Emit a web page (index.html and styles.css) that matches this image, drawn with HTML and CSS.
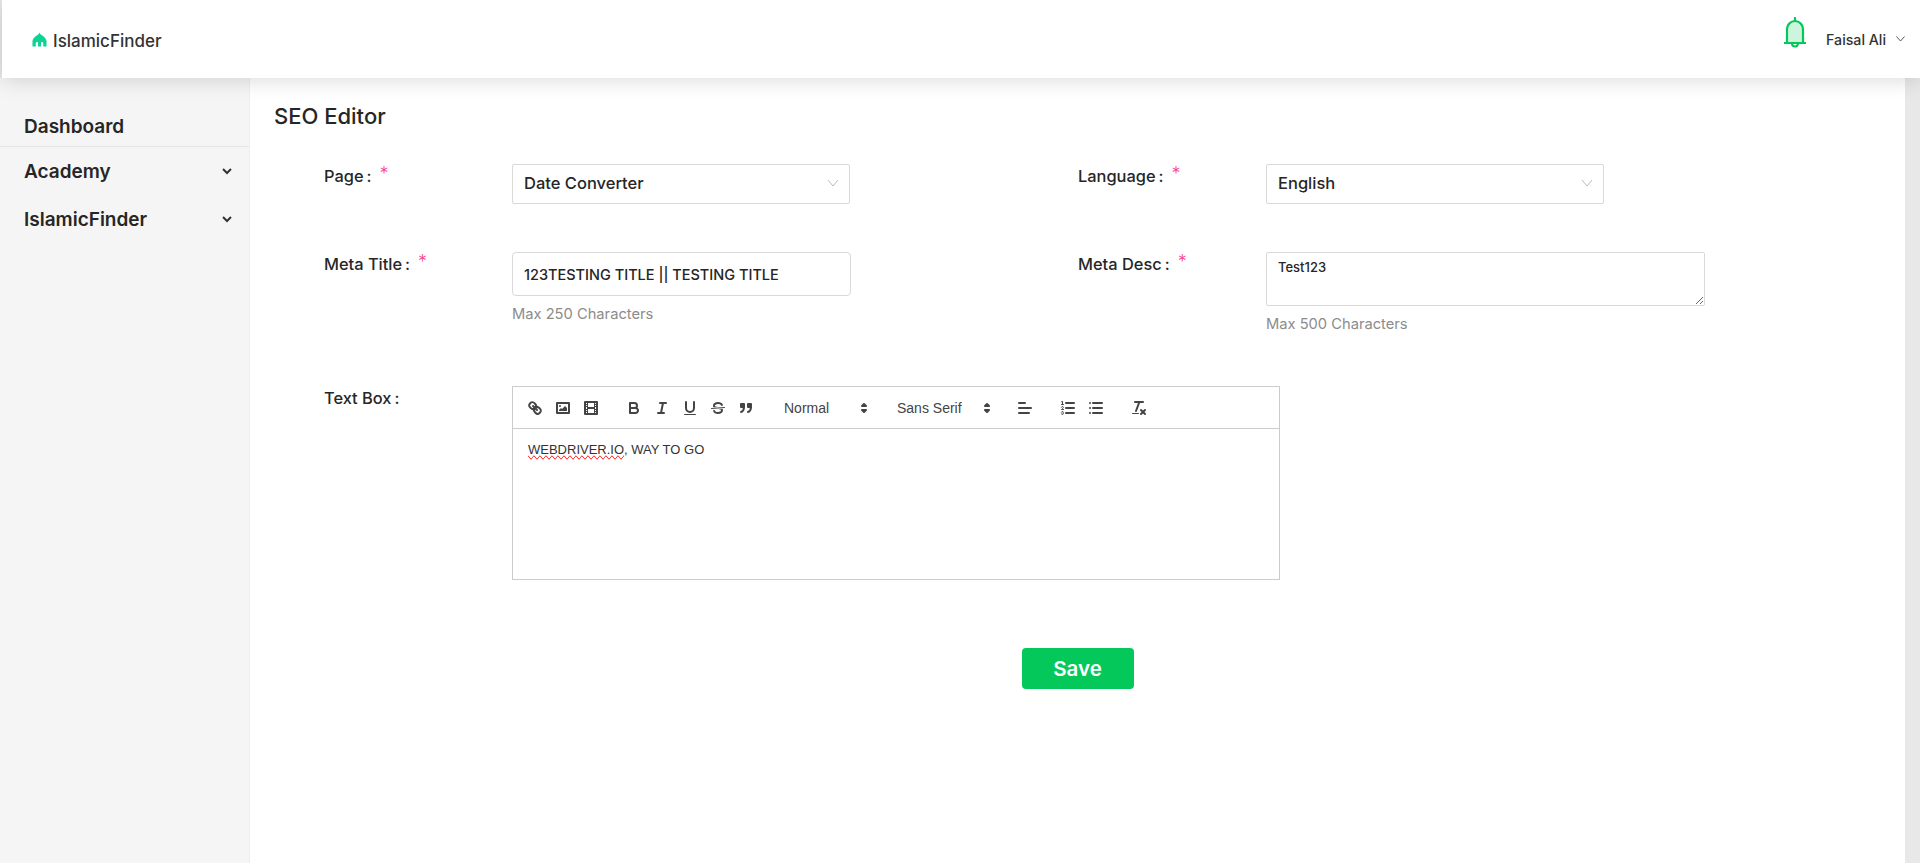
FILE: index.html
```html
<!DOCTYPE html>
<html lang="en">

<head>
    <title>SEO Editor</title>
    <link rel="stylesheet" href="styles.css">
</head>

<body>
    <header class="topbar">
        <a class="logo" href="#">
            <svg class="logo-icon" viewBox="0 0 16 16"><path d="M8 0.5 L9 2.5 C11 4 14.5 5.5 15.5 9.5 V15.5 H12 V12 A1.6 1.6 0 0 0 9.6 11 V15.5 H6.4 V11 A1.6 1.6 0 0 0 4 12 V15.5 H0.5 V9.5 C1.5 5.5 5 4 7 2.5 Z"/></svg>
            <span>IslamicFinder</span>
        </a>
        <div class="topbar-right">
            <svg class="bell" viewBox="0 0 22 32"><path class="bell-body" d="M3 26 V13 C3 7 7 4 11 4 S19 7 19 13 V26"/><path class="bell-line" d="M11 1 V4 M0.5 26 H21.5 M8 26.5 A3 3 0 0 0 14 26.5"/></svg>
            <span class="user">Faisal Ali</span>
            <svg class="chevron-thin user-chevron" viewBox="0 0 9 6"><path d="M0.5 0.5 L4.5 5 L8.5 0.5"/></svg>
        </div>
    </header>

    <div class="layout">
        <aside class="sidebar">
            <a class="nav-item nav-first" href="#">Dashboard</a>
            <a class="nav-item" href="#">Academy <svg class="nav-arrow" viewBox="0 0 10 7"><path d="M1 1 L5 5 L9 1"/></svg></a>
            <a class="nav-item" href="#">IslamicFinder <svg class="nav-arrow" viewBox="0 0 10 7"><path d="M1 1 L5 5 L9 1"/></svg></a>
        </aside>

        <main class="content">
            <h1>SEO Editor</h1>
            <form class="seo-form">
                <div class="form-row row-select">
                    <label class="label">Page<i>:</i><em>*</em></label>
                    <div class="field">
                        <div class="select"><span>Date Converter</span><svg class="chevron-thin" viewBox="0 0 12 8"><path d="M1 1 L6 7 L11 1"/></svg></div>
                    </div>
                    <label class="label">Language<i>:</i><em>*</em></label>
                    <div class="field">
                        <div class="select"><span>English</span><svg class="chevron-thin" viewBox="0 0 12 8"><path d="M1 1 L6 7 L11 1"/></svg></div>
                    </div>
                </div>

                <div class="form-row row-meta">
                    <label class="label">Meta Title<i>:</i><em>*</em></label>
                    <div class="field">
                        <input class="input" type="text" value="123TESTING TITLE || TESTING TITLE">
                        <p class="hint">Max 250 Characters</p>
                    </div>
                    <label class="label">Meta Desc<i>:</i><em>*</em></label>
                    <div class="field">
                        <textarea class="textarea">Test123</textarea>
                        <p class="hint">Max 500 Characters</p>
                    </div>
                </div>

                <div class="form-row row-text">
                    <label class="label">Text Box<i>:</i></label>
                    <div class="editor">
                        <div class="toolbar">
                            <span class="tool-group">
                                <button type="button"><svg viewBox="0 0 18 18"><line class="st" x1="7" x2="11" y1="7" y2="11"/><path class="st" d="M8.9,4.577a3.476,3.476,0,0,1,.36,4.679A3.476,3.476,0,0,1,4.577,8.9C3.185,7.5,2.035,6.4,4.217,4.217S7.5,3.185,8.9,4.577Z"/><path class="st" d="M13.423,9.1a3.476,3.476,0,0,0-4.679-.36,3.476,3.476,0,0,0,.36,4.679c1.392,1.392,2.5,2.542,4.679.36S14.815,10.5,13.423,9.1Z"/></svg></button>
                                <button type="button"><svg viewBox="0 0 18 18"><rect class="st" height="10" width="12" x="3" y="4"/><circle class="fl" cx="6" cy="7" r="1"/><polyline class="fl" points="5 12 5 11 7 9 8 10 11 7 13 9 13 12 5 12"/></svg></button>
                                <button type="button"><svg viewBox="0 0 18 18"><rect class="st" height="12" width="12" x="3" y="3"/><rect class="fl" height="12" width="1" x="5" y="3"/><rect class="fl" height="12" width="1" x="12" y="3"/><rect class="fl" height="2" width="8" x="5" y="8"/><rect class="fl" height="1" width="3" x="3" y="5"/><rect class="fl" height="1" width="3" x="3" y="7"/><rect class="fl" height="1" width="3" x="3" y="10"/><rect class="fl" height="1" width="3" x="3" y="12"/><rect class="fl" height="1" width="3" x="12" y="5"/><rect class="fl" height="1" width="3" x="12" y="7"/><rect class="fl" height="1" width="3" x="12" y="10"/><rect class="fl" height="1" width="3" x="12" y="12"/></svg></button>
                            </span>
                            <span class="tool-group">
                                <button type="button"><svg viewBox="0 0 18 18"><path class="st" d="M5,4H9.5A2.5,2.5,0,0,1,12,6.5v0A2.5,2.5,0,0,1,9.5,9H5A0,0,0,0,1,5,9V4A0,0,0,0,1,5,4Z"/><path class="st" d="M5,9h5.5A2.5,2.5,0,0,1,13,11.5v0A2.5,2.5,0,0,1,10.5,14H5a0,0,0,0,1,0,0V9A0,0,0,0,1,5,9Z"/></svg></button>
                                <button type="button"><svg viewBox="0 0 18 18"><line class="st" x1="7" x2="13" y1="4" y2="4"/><line class="st" x1="5" x2="11" y1="14" y2="14"/><line class="st" x1="8" x2="10" y1="14" y2="4"/></svg></button>
                                <button type="button"><svg viewBox="0 0 18 18"><path class="st" d="M5,3V9a4.012,4.012,0,0,0,4,4H9a4.012,4.012,0,0,0,4-4V3"/><rect class="fl" height="1" rx="0.5" ry="0.5" width="12" x="3" y="15"/></svg></button>
                                <button type="button"><svg viewBox="0 0 18 18"><line class="st thin" x1="15.5" x2="2.5" y1="8.5" y2="9.5"/><path class="fl" d="M9.007,8C6.542,7.791,6,7.519,6,6.5,6,5.792,7.283,5,9,5c1.571,0,2.765.679,2.969,1.309a1,1,0,0,0,1.9-.617C13.356,4.106,11.354,3,9,3,6.2,3,4,4.538,4,6.5a3.2,3.2,0,0,0,.5,1.843Z"/><path class="fl" d="M8.984,10C11.457,10.208,12,10.479,12,11.5c0,.708-1.283,1.5-3,1.5-1.571,0-2.765-.679-2.969-1.309a1,1,0,1,0-1.9.617C4.644,13.894,6.646,15,9,15c2.8,0,5-1.538,5-3.5a3.2,3.2,0,0,0-.5-1.843Z"/></svg></button>
                                <button type="button"><svg viewBox="0 0 18 18"><rect class="st fl" height="3" width="3" x="4" y="5"/><rect class="st fl" height="3" width="3" x="11" y="5"/><path class="st" d="M7,8c0,4.031-3,5-3,5"/><path class="st" d="M14,8c0,4.031-3,5-3,5"/></svg></button>
                            </span>
                            <span class="tool-group picker picker-header">Normal<svg viewBox="0 0 18 18"><polygon class="st" points="7 11 9 13 11 11 7 11"/><polygon class="st" points="7 7 9 5 11 7 7 7"/></svg></span>
                            <span class="tool-group picker picker-font">Sans Serif<svg viewBox="0 0 18 18"><polygon class="st" points="7 11 9 13 11 11 7 11"/><polygon class="st" points="7 7 9 5 11 7 7 7"/></svg></span>
                            <span class="tool-group">
                                <button type="button"><svg viewBox="0 0 18 18"><line class="st" x1="3" x2="15" y1="9" y2="9"/><line class="st" x1="3" x2="13" y1="14" y2="14"/><line class="st" x1="3" x2="9" y1="4" y2="4"/></svg></button>
                            </span>
                            <span class="tool-group">
                                <button type="button"><svg viewBox="0 0 18 18"><line class="st" x1="7" x2="15" y1="4" y2="4"/><line class="st" x1="7" x2="15" y1="9" y2="9"/><line class="st" x1="7" x2="15" y1="14" y2="14"/><line class="st thin" x1="2.5" x2="4.5" y1="5.5" y2="5.5"/><path class="fl" d="M3.5,6A0.5,0.5,0,0,1,3,5.5V3.085l-0.276.138A0.5,0.5,0,0,1,2.053,3c-0.124-.247-0.023-0.324.224-0.447l1-.5A0.5,0.5,0,0,1,4,2.5v3A0.5,0.5,0,0,1,3.5,6Z"/><path class="st thin" d="M4.5,10.5h-2c0-.234,1.85-1.076,1.85-2.234A0.959,0.959,0,0,0,2.5,8.156"/><path class="st thin" d="M2.5,14.846a0.959,0.959,0,0,0,1.85-.109A0.7,0.7,0,0,0,3.75,14a0.688,0.688,0,0,0,.6-0.736,0.959,0.959,0,0,0-1.85-.109"/></svg></button>
                                <button type="button"><svg viewBox="0 0 18 18"><line class="st" x1="6" x2="15" y1="4" y2="4"/><line class="st" x1="6" x2="15" y1="9" y2="9"/><line class="st" x1="6" x2="15" y1="14" y2="14"/><line class="st" x1="3" x2="3" y1="4" y2="4"/><line class="st" x1="3" x2="3" y1="9" y2="9"/><line class="st" x1="3" x2="3" y1="14" y2="14"/></svg></button>
                            </span>
                            <span class="tool-group">
                                <button type="button"><svg viewBox="0 0 18 18"><line class="st" x1="5" x2="13" y1="3" y2="3"/><line class="st" x1="6" x2="9.35" y1="12" y2="3"/><line class="st" x1="11" x2="15" y1="11" y2="15"/><line class="st" x1="15" x2="11" y1="11" y2="15"/><rect class="fl" height="1" rx="0.5" ry="0.5" width="7" x="2" y="14"/></svg></button>
                            </span>
                        </div>
                        <div class="editor-body"><span class="misspelt">WEBDRIVER.IO</span>, WAY TO GO</div>
                    </div>
                </div>

                <div class="actions">
                    <button class="save" type="button">Save</button>
                </div>
            </form>
        </main>
    </div>
</body>

</html>
```

FILE: styles.css
```css
* { box-sizing: border-box; }
html, body { height: 100%; }
body { margin: 0; background: #e8e8e8; font-family: Inter, "Open Sans", sans-serif; color: #262626; overflow: hidden; }

.topbar { height: 78px; margin-left: 2px; background: #fff; display: flex; align-items: center; justify-content: space-between; box-shadow: 0 2px 20px rgba(0, 0, 0, 0.15); position: relative; z-index: 2; }
.logo { display: flex; align-items: center; gap: 6px; margin-left: 30px; font-size: 17px; font-weight: 500; color: #333; text-decoration: none; }
.logo span { padding-top: 3px; }
.logo-icon { width: 15px; height: 15px; fill: #0fd394; }
.topbar-right { display: flex; align-items: center; }
.bell { width: 22px; height: 32px; margin-right: 20px; margin-bottom: 12px; }
.bell-body { fill: #cdf5dd; stroke: #04c85a; stroke-width: 2.2; }
.bell-line { fill: none; stroke: #04c85a; stroke-width: 2.2; stroke-linecap: round; }
.user { font-size: 14.2px; font-weight: 500; color: #333; }
.chevron-thin { fill: none; stroke: #bbb; stroke-width: 1; width: 12px; height: 8px; }
.user-chevron { stroke: #555; width: 9px; height: 6px; margin: 0 15px 0 10px; }

.layout { display: flex; height: calc(100vh - 78px); margin-right: 15px; }
.sidebar { width: 250px; flex: none; background: #f5f5f5; padding-top: 30px; border-right: 1px solid #eee; }
.nav-item { display: flex; align-items: center; justify-content: space-between; height: 48px; padding: 0 17px 0 24px; font-size: 19px; font-weight: 600; color: #262626; text-decoration: none; }
.nav-first { height: 39px; padding-bottom: 2px; border-bottom: 1px solid #e5e5e5; }
.nav-arrow { width: 10px; height: 7px; fill: none; stroke: #333; stroke-width: 2; }

.content { flex: 1; background: #fff; padding: 23px 0 0 24px; }
h1 { margin: 0 0 33px; font-size: 22px; line-height: 30px; font-weight: 500; }

.seo-form { padding-left: 50px; }
.form-row { display: grid; grid-template-columns: 188px 566px 188px 1fr; }
.row-select { height: 88px; }
.row-meta { height: 134px; }
.label { font-size: 16.4px; font-weight: 450; line-height: 24px; margin-top: -2px; color: #262626; }
.row-text .label { margin-top: 0; }
.label i { font-style: normal; margin: 0 0 0 3px; }
.label em { font-style: normal; color: #f5478c; font-size: 18px; margin-left: 8px; vertical-align: 1.5px; font-weight: 300; }

.select, .input, .textarea { font-family: inherit; font-weight: 450; color: #262626; background: #fff; border: 1px solid #d9d9d9; border-radius: 2px; }
.select { width: 338px; height: 40px; padding: 0 10px 2px 11px; font-size: 16.5px; display: flex; align-items: center; justify-content: space-between; }
.input { display: block; width: 339px; height: 44px; padding: 0 11px; font-size: 14.5px; border-radius: 4px; }
.textarea { display: block; width: 439px; height: 54px; padding: 6px 11px; font-size: 13px; outline: 0; }
.hint { margin: 8px 0 0; font-size: 14.7px; line-height: 20px; color: #8c8c8c; }

.editor { grid-column: 2 / 4; width: 768px; border: 1px solid #ccc; height: 194px; }
.toolbar { display: flex; height: 42px; padding: 9px 8px 0; border-bottom: 1px solid #ccc; }
.tool-group { display: flex; margin-right: 15px; }
.toolbar button { width: 28px; height: 24px; padding: 3px 5px; border: 0; background: none; }
.toolbar svg { display: block; width: 18px; height: 18px; }
.st { fill: none; stroke: #444; stroke-width: 2; stroke-linecap: round; stroke-linejoin: round; }
.thin { stroke-width: 1; }
.fl { fill: #444; }
.picker { font-family: "Liberation Sans", Arial, sans-serif; font-size: 14px; font-weight: 500; color: #444; align-items: center; justify-content: space-between; height: 24px; padding-left: 9px; }
.picker-header { width: 98px; }
.picker-font { width: 108px; }
.editor-body { padding: 12px 15px; font-family: "Liberation Sans", Helvetica, Arial, sans-serif; font-size: 13px; line-height: 1.42; color: #333; }
.misspelt { text-decoration-line: spelling-error; }

.actions { display: flex; justify-content: center; margin-top: 68px; margin-left: -74px; }
.save { width: 112px; height: 41px; border: 0; border-radius: 4px; background: #04c85a; color: #fff; font-family: inherit; font-size: 20.5px; font-weight: 600; }
```
